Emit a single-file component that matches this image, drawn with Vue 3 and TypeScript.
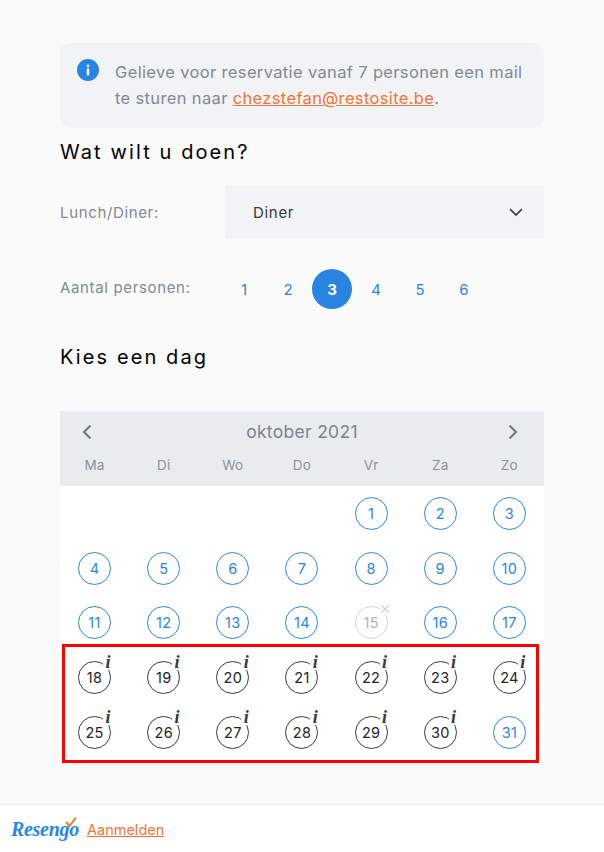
<script setup lang="ts">
interface Day {
  n: number
  state: 'free' | 'info' | 'closed'
}

const weekdays = ['Ma', 'Di', 'Wo', 'Do', 'Vr', 'Za', 'Zo']
const persons = [1, 2, 3, 4, 5, 6]
const selected = 3

const days: Day[] = Array.from({ length: 31 }, (_, i) => {
  const n = i + 1
  let state: Day['state'] = 'free'
  if (n === 15) state = 'closed'
  else if (n >= 18 && n <= 30) state = 'info'
  return { n, state }
})
</script>

<template>
  <div class="page">
    <main class="content">
      <div class="notice">
        <svg class="notice-icon" width="22" height="22" viewBox="0 0 22 22">
          <circle cx="11" cy="11" r="11" fill="#2a85e2" />
          <rect x="9.800" y="9.400" width="2.400" height="7" fill="#fff" />
          <rect x="9.800" y="5.600" width="2.400" height="2.400" fill="#fff" />
        </svg>
        <p>Gelieve voor reservatie vanaf 7 personen een mail<br />te sturen naar <a href="#">chezstefan@restosite.be</a>.</p>
      </div>

      <h2 class="title first">Wat wilt u doen?</h2>

      <div class="row select-row">
        <span class="label">Lunch/Diner:</span>
        <div class="select">
          <span>Diner</span>
          <svg width="16" height="10" viewBox="0 0 16 10">
            <path d="M2 2l6 6 6-6" fill="none" stroke="#343a40" stroke-width="1.700" />
          </svg>
        </div>
      </div>

      <div class="row persons-row">
        <span class="label lifted">Aantal personen:</span>
        <div class="persons">
          <span v-for="p in persons" :key="p" class="person" :class="{ active: p === selected }">{{ p }}</span>
        </div>
      </div>

      <h2 class="title second">Kies een dag</h2>

      <section class="calendar">
        <header class="cal-head">
          <div class="month">
            <svg width="10" height="16" viewBox="0 0 10 16">
              <path d="M8.500 1.500L2 8l6.500 6.500" fill="none" stroke="#6c757d" stroke-width="2" />
            </svg>
            <span class="month-name">oktober 2021</span>
            <svg width="10" height="16" viewBox="0 0 10 16">
              <path d="M1.500 1.500L8 8l-6.500 6.500" fill="none" stroke="#6c757d" stroke-width="2" />
            </svg>
          </div>
          <div class="weekdays">
            <span v-for="w in weekdays" :key="w">{{ w }}</span>
          </div>
        </header>
        <div class="days">
          <div v-for="d in days" :key="d.n" class="cell" :class="{ start: d.n === 1 }">
            <span class="day" :class="d.state">
              {{ d.n }}
              <i v-if="d.state === 'info'" class="mark-i">i</i>
              <svg v-if="d.state === 'closed'" class="mark-x" width="10" height="10" viewBox="0 0 10 10">
                <path d="M1 1l8 8M9 1l-8 8" stroke="#ced4da" stroke-width="1.200" />
              </svg>
            </span>
          </div>
        </div>
        <div class="highlight"></div>
      </section>
    </main>

    <footer class="footer">
      <span class="logo">
        Resengo
        <svg class="logo-check" width="14" height="14" viewBox="0 0 14 14">
          <path d="M2 6l3.500 4L12 1.500" fill="none" stroke="#f07a1f" stroke-width="2" />
        </svg>
      </span>
      <a href="#">Aanmelden</a>
    </footer>
  </div>
</template>

<style>
html, body {
  margin: 0;
  background: #fafafa;
}
</style>

<style scoped>
.page {
  width: 604px;
  height: 852px;
  display: flex;
  flex-direction: column;
  font-family: Inter, "Open Sans", sans-serif;
  overflow: hidden;
}
.content {
  flex: 1;
  padding: 43px 60px 0;
}
.notice {
  display: flex;
  gap: 16px;
  height: 85px;
  box-sizing: border-box;
  padding: 16px 17px;
  background: #f2f3f5;
  border-radius: 10px;
}
.notice-icon {
  flex: none;
}
.notice p {
  margin: 0;
  font-size: 16.500px;
  line-height: 26px;
  letter-spacing: 0.350px;
  white-space: nowrap;
  color: #7f8a94;
}
a {
  color: #f2733a;
  text-decoration: underline;
}
.title {
  margin: 0;
  font-size: 20px;
  line-height: 24px;
  font-weight: 400;
  letter-spacing: 2.100px;
  color: #000;
}
.title.first {
  margin-top: 12px;
}
.title.second {
  margin-top: 36px;
}
.row {
  display: flex;
  align-items: center;
}
.label {
  width: 165px;
  font-size: 15px;
  letter-spacing: 0.650px;
  white-space: nowrap;
  color: #7f8a94;
}
.label.lifted {
  margin-bottom: 3px;
}
.select-row {
  margin-top: 22px;
}
.select {
  flex: 1;
  height: 52px;
  background: #f2f3f5;
  display: flex;
  align-items: center;
  justify-content: space-between;
  padding: 0 20px 0 28px;
  font-size: 15px;
  letter-spacing: 0.700px;
  color: #343a40;
}
.persons-row {
  margin-top: 31px;
}
.persons {
  display: flex;
  gap: 4px;
  margin-left: -1px;
}
.person {
  width: 40px;
  height: 40px;
  border-radius: 50%;
  display: flex;
  align-items: center;
  justify-content: center;
  font-size: 15px;
  font-weight: 400;
  color: #2a85e2;
}
.person.active {
  background: #2a85e2;
  color: #fff;
  font-weight: 700;
}
.calendar {
  position: relative;
  margin-top: 42px;
  background: #fff;
}
.cal-head {
  height: 75px;
  background: #e9ecef;
  display: flex;
  flex-direction: column;
}
.month {
  height: 41px;
  padding: 0 26px 0 22px;
  display: flex;
  align-items: center;
  justify-content: space-between;
  font-size: 17.500px;
  font-weight: 400;
  letter-spacing: 0.300px;
  color: #7a848d;
}
.month-name {
  margin-left: 4px;
}
.weekdays {
  display: grid;
  grid-template-columns: repeat(7, 1fr);
  text-align: center;
  font-size: 13.500px;
  line-height: 20px;
  letter-spacing: 0.300px;
  color: #8a939b;
  margin-top: 3px;
}
.days {
  display: grid;
  grid-template-columns: repeat(7, 1fr);
  grid-auto-rows: 54.750px;
  height: 277px;
}
.cell {
  display: flex;
  align-items: center;
  justify-content: center;
}
.cell.start {
  grid-column-start: 5;
}
.day {
  position: relative;
  box-sizing: border-box;
  width: 33px;
  height: 33px;
  border-radius: 50%;
  border: 1px solid #2a85e2;
  display: flex;
  align-items: center;
  justify-content: center;
  font-size: 14.500px;
  letter-spacing: 0.300px;
  color: #2a85e2;
}
.day.info {
  border-color: #343a40;
  color: #212529;
}
.day.closed {
  border-color: #ced4da;
  color: #adb5bd;
}
.mark-i {
  position: absolute;
  top: -7px;
  right: -3px;
  width: 10px;
  height: 15px;
  background: #fff;
  font: italic 700 18px/15px "Liberation Serif", serif;
  color: #343a40;
  text-align: center;
}
.mark-x {
  position: absolute;
  top: -3px;
  right: -3px;
  background: #fff;
}
.highlight {
  position: absolute;
  left: 2px;
  right: 5px;
  top: 233px;
  height: 119px;
  box-sizing: border-box;
  border: 3px solid #f00;
}
.footer {
  height: 47px;
  flex: none;
  background: #fff;
  border-top: 1px solid #ebebeb;
  display: flex;
  align-items: center;
  gap: 11px;
  padding-left: 11px;
  font-size: 14.500px;
}
.footer a {
  margin-top: 2px;
}
.logo {
  position: relative;
  font: italic 700 20px/24px "Liberation Serif", serif;
  color: #2a85e2;
  letter-spacing: -0.300px;
  width: 65px;
}
.logo-check {
  position: absolute;
  right: -2px;
  top: -1px;
}
</style>
